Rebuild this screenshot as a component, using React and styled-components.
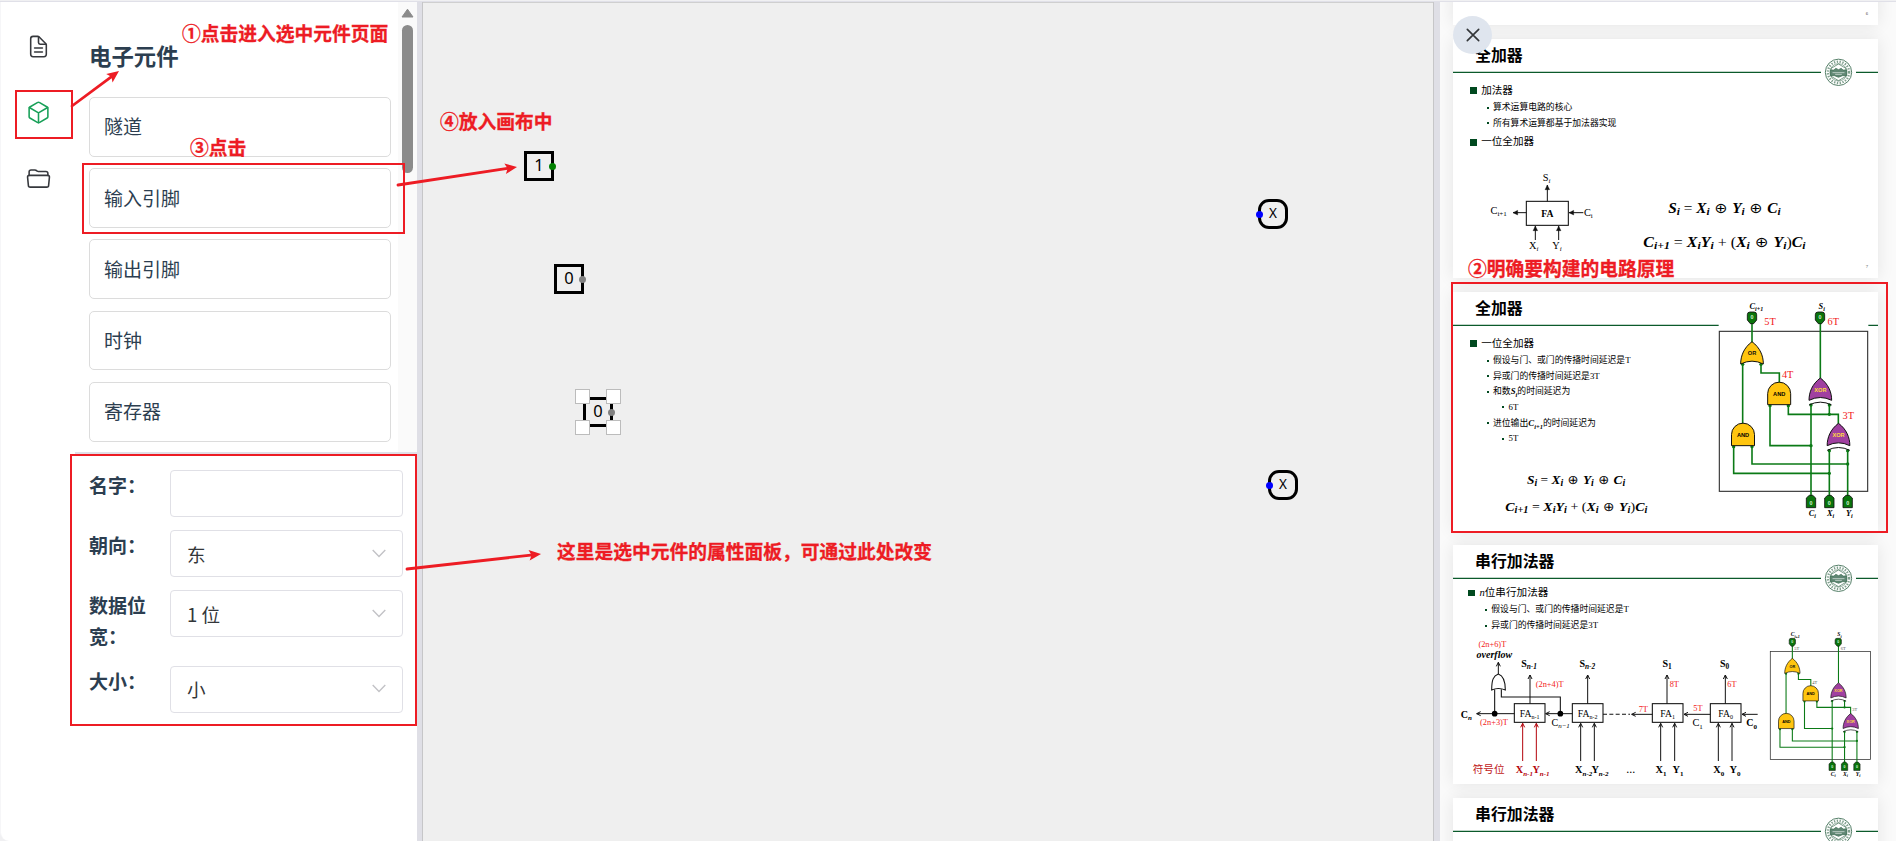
import React from "react";
import styled, { createGlobalStyle } from "styled-components";
import {
  IoDocumentTextOutline,
  IoCubeOutline,
  IoFolderOpenOutline,
  IoCloseOutline,
} from "react-icons/io5";

const SANS = `"Noto Sans CJK SC", "Noto Sans", sans-serif`;
const SERIF = `"Liberation Serif", "Noto Sans CJK SC", serif`;
const RED = "#ed1c24";
const GREEN = "#0b7a16";

const GlobalStyle = createGlobalStyle`
  * { box-sizing: border-box; }
  body { margin: 0; background: #efefef; font-family: ${SANS}; overflow: hidden; }
`;

/* ---------- shell ---------- */
const Shell = styled.div`
  position: relative;
  width: 1896px;
  height: 841px;
  overflow: hidden;
  padding-top: 1px;
  background: #f0f0f2;
`;
const Workspace = styled.main`
  display: flex;
  height: 840px;
  border-top: 1px solid #e0e0e8;
`;
const Sidebar = styled.aside`
  display: flex;
  width: 417px;
  background: #fff;
  border-bottom-left-radius: 9px;
  border-left: 1px solid #f6f6f8;
`;
const Rail = styled.nav`
  width: 74px;
  padding: 32px 0 0 25px;
  display: flex;
  flex-direction: column;
  gap: 41px;
`;
const RailIcon = styled.span`
  display: flex;
  width: 25px;
  height: 25px;
  font-size: 25px;
  color: ${(p) => (p.$active ? "#18a058" : "#36383d")};
`;
const Panels = styled.div`
  flex: 1;
  display: flex;
  flex-direction: column;
`;
const LibraryPane = styled.section`
  display: flex;
  height: 450px;
`;
const Library = styled.div`
  flex: 1;
  padding: 37px 7px 0 14px;
`;
const LibraryTitle = styled.h2`
  margin: 0 0 25.6px;
  font-size: 22.4px;
  line-height: 32.4px;
  color: #2c3e50;
`;
const PartList = styled.div`
  display: flex;
  flex-direction: column;
  gap: 11.4px;
`;
const PartCard = styled.div`
  height: 59.8px;
  padding: 0 14px 2px;
  display: flex;
  align-items: center;
  border: 1px solid #dcdcdc;
  border-radius: 5px;
  font-size: 19px;
  color: #2c3e50;
`;
const ScrollTrack = styled.div`
  width: 19px;
  background: #fafafa;
  display: flex;
  flex-direction: column;
  align-items: center;
  padding-top: 6px;
`;
const ScrollArrow = styled.svg`
  display: block;
  width: 13px;
  height: 10px;
`;
const ScrollThumb = styled.div`
  width: 11px;
  height: 148px;
  margin-top: 7px;
  border-radius: 6px;
  background: #8b8b8b;
`;
const Properties = styled.section`
  flex: 1;
  display: flex;
  flex-direction: column;
  gap: 13.2px;
  padding: 16px 14px 0;
  border-top: 2px solid #dfdfe7;
`;
const PropertyRow = styled.label`
  display: flex;
  align-items: flex-start;
`;
const PropertyName = styled.span`
  width: 81px;
  margin-top: -1px;
  margin-bottom: 1px;
  padding-right: 19px;
  font-size: 19px;
  line-height: 31px;
  font-weight: 700;
  color: #2c3e50;
`;
const Field = styled.span`
  flex: 1;
  height: 47px;
  padding: 0 16px 1px;
  display: flex;
  align-items: center;
  justify-content: space-between;
  border: 1px solid #e0e0e6;
  border-radius: 4px;
  font-size: 18.6px;
  color: #333639;
`;
const Splitter = styled.div`
  width: ${(p) => p.$width}px;
  background: #dfdfe6;
  border-${(p) => p.$edge}: 1px solid #c6c6c8;
`;

/* ---------- circuit canvas ---------- */
const Canvas = styled.section`
  position: relative;
  width: 1010px;
  background: #efefef;
  border-top: 1px solid #cfcfcf;
`;
const Pin = styled.div`
  position: absolute;
  left: ${(p) => p.$x}px;
  top: ${(p) => p.$y}px;
  width: 30px;
  height: 30px;
  border: 3px solid #000;
  border-radius: ${(p) => (p.$round ? 11 : 0)}px;
  font: ${(p) => (p.$round ? 13.5 : 16.5)}px/${(p) => (p.$round ? 23 : 22)}px "Noto Sans", sans-serif;
  text-align: center;
  color: #000;
`;
const Port = styled.i`
  position: absolute;
  top: 8.5px;
  ${(p) => p.$side}: -5px;
  width: 7px;
  height: 7px;
  border-radius: 50%;
  background: ${(p) => p.$color};
`;
const Handle = styled.i`
  position: absolute;
  ${(p) => p.$v}: -11px;
  ${(p) => p.$h}: -11px;
  width: 15px;
  height: 15px;
  background: #fff;
  border: 1px solid #bcbcbc;
`;

/* ---------- slides ---------- */
const Deck = styled.aside`
  position: relative;
  flex: 1;
  overflow: hidden;
  background: #fafafa;
`;
const SlideList = styled.div`
  display: flex;
  flex-direction: column;
  gap: 14px;
  margin-top: -216px;
  padding-left: 13px;
`;
const SlideCard = styled.article`
  position: relative;
  flex: none;
  width: 425px;
  height: 239px;
  background: #fff;
  box-shadow: 0 0 16px rgba(0, 0, 0, 0.09);
`;
const SlideTitle = styled.h3`
  margin: 0;
  height: 32.5px;
  padding-left: 22px;
  font-size: 15.9px;
  line-height: 31px;
  color: #000;
`;
const Bullets = styled.ul`
  margin: 0;
  padding: ${(p) => (p.$tight ? "6.3px 0 0 15.3px" : "10px 0 0 17px")};
  list-style: none;
  color: #000;
`;
const Topic = styled.li`
  display: flex;
  align-items: center;
  height: 18.4px;
  margin-top: ${(p) => p.$gap || 0}px;
  font: 10.6px/18px ${SERIF};
  &::before {
    content: "";
    width: 7px;
    height: 6.5px;
    margin-right: 4.2px;
    background: #00491f;
  }
`;
const Point = styled.li`
  display: flex;
  align-items: center;
  height: 15.6px;
  padding-left: ${(p) => (p.$deep ? 32 : 16.5)}px;
  font: 8.82px/15px ${SERIF};
  &::before {
    content: "";
    width: 2px;
    height: 2px;
    margin-right: 4.5px;
    background: #00491f;
  }
`;
const MathSymbol = styled.span`
  font-weight: 700;
  font-style: italic;
  sub { font-size: 6.5px; line-height: 0; }
`;
const Figure = styled.svg`
  position: absolute;
  inset: 0;
  width: 425px;
  height: 239px;
`;
const CloseButton = styled.button`
  position: absolute;
  left: 13px;
  top: 14px;
  width: 39px;
  height: 38px;
  padding: 0;
  display: grid;
  place-items: center;
  border: 0;
  border-radius: 50%;
  background: #dfe5ee;
  color: #333639;
  font-size: 26px;
`;

/* ---------- annotations ---------- */
const Highlight = styled.div`
  position: absolute;
  left: ${(p) => p.$x}px;
  top: ${(p) => p.$y}px;
  width: ${(p) => p.$w}px;
  height: ${(p) => p.$h}px;
  border: 2px solid ${RED};
`;
const Note = styled.span`
  position: absolute;
  left: ${(p) => p.$x}px;
  top: ${(p) => p.$y - 15}px;
  font-size: 18.75px;
  line-height: 28px;
  font-weight: 700;
  -webkit-text-stroke: 0.3px ${RED};
  white-space: nowrap;
  color: ${RED};
`;
const ArrowLayer = styled.svg`
  position: absolute;
  inset: 0;
  pointer-events: none;
`;

const Chevron = () => (
  <svg width="14" height="9" viewBox="0 0 14 9">
    <path d="M.7 1 7 7.4 13.3 1" fill="none" stroke="#c2c2c6" strokeWidth="1.4" />
  </svg>
);

function PointerArrow({ x1, y1, x2, y2 }) {
  const angle = (Math.atan2(y2 - y1, x2 - x1) * 180) / Math.PI;
  const length = Math.hypot(x2 - x1, y2 - y1);
  return (
    <g transform={`translate(${x1} ${y1}) rotate(${angle})`}>
      <path d={`M0 0H${length - 8}`} stroke={RED} strokeWidth="2.8" strokeLinecap="round" />
      <path d={`M${length} 0l-12 -5.3 2.5 5.3 -2.5 5.3z`} fill={RED} />
    </g>
  );
}

const Seal = () => (
  <g transform="translate(1156.5 100)" fill="none" stroke="#3a6b50">
    <circle r="50" fill="#fff" stroke="none" />
    <circle r="39.5" strokeWidth="2.6" />
    <circle r="32" strokeWidth="7" strokeDasharray="4 4.5" stroke="#7f9f8d" />
    <circle r="26" strokeWidth="1.6" />
    <path d="M0-25 22-12V12L0 25-22 12V-12z" strokeWidth="2" />
    <path d="M-24-7h10l6-5 8 4 8-4 6 5h10v17h-12l-12 5-12-5h-12z" fill="#5f8673" strokeWidth="2" />
    <path d="M-18 1H18M-10 6H10" stroke="#e8efeb" strokeWidth="2" />
  </g>
);

/* text with a subscript, set in figure units */
const Sym = ({ x, y, base, sub, size = 31, subSize = 21, bold, italic, subItalic = true, fill = "#000" }) => (
  <text
    x={x}
    y={y}
    textAnchor="middle"
    fill={fill}
    fontFamily={SERIF}
    fontSize={size}
    fontWeight={bold ? 700 : 400}
    fontStyle={italic ? "italic" : "normal"}
  >
    {base}
    <tspan dy={size * 0.22} fontSize={subSize} fontStyle={subItalic ? "italic" : "normal"}>{sub}</tspan>
  </text>
);

const Formula = ({ x, y, width, size, parts }) => {
  const drop = size * 0.17;
  let lowered = false;
  return (
    <text x={x} y={y} textLength={width} lengthAdjust="spacingAndGlyphs" fontSize={size} fontFamily={`"Liberation Serif", "DejaVu Sans", serif`} fill="#000" xmlSpace="preserve">
      {parts.map((part, i) => {
        const isSub = part[0] === "_";
        const isSign = /[=⊕+()]/.test(part) && !isSub;
        const isPlusRing = part.includes("⊕");
        const dy = isSub && !lowered ? drop : !isSub && lowered ? -drop : 0;
        lowered = isSub;
        return (
          <tspan
            key={i}
            dy={dy}
            fontSize={isSub ? size * 0.74 : size}
            fontFamily={isPlusRing ? "DejaVu Sans" : undefined}
            fontWeight={isSign ? 400 : 700}
            fontStyle={isSign ? "normal" : "italic"}
          >
            {isSub ? part.slice(1) : part}
          </tspan>
        );
      })}
    </text>
  );
};
const SUM = ["S", "_i", " = ", "X", "_i", " ⊕ ", "Y", "_i", " ⊕ ", "C", "_i"];
const CARRY = ["C", "_i+1", " = ", "X", "_i", "Y", "_i", " + (", "X", "_i", " ⊕ ", "Y", "_i", ")", "C", "_i"];

/* ---------- one-bit adder schematic ---------- */
const gateText = { fontFamily: "Liberation Sans", fontWeight: 700, fontSize: 17, textAnchor: "middle" };
const AndGate = ({ x, y }) => (
  <g transform={`translate(${x} ${y})`}>
    <path d="M-34.5 67V34A34.5 34.5 0 0 1 34.5 34V67Z" fill="#ffc50f" stroke="#111" strokeWidth="3" />
    <text y="41" {...gateText}>AND</text>
  </g>
);
const OrGate = ({ x, y, exclusive }) => (
  <g transform={`translate(${x} ${y})`} stroke="#111" strokeWidth="3">
    <path d="M0 0C-24 18-34 42-34 67Q0 50 34 67C34 42 24 18 0 0Z" fill={exclusive ? "#a040a0" : "#ffc50f"} />
    {exclusive && <path d="M-34 81Q0 64 34 81" fill="none" />}
    <text y="41" {...gateText} stroke="none" fill={exclusive ? "#ffdc3c" : "#111"}>{exclusive ? "XOR" : "OR"}</text>
  </g>
);
const Terminal = ({ x, y, up }) => (
  <g transform={`translate(${x} ${y})`}>
    <path
      d={up ? "M-14-12L-5-20H5L14-12V17H-14Z" : "M-14-8Q-14-16-6-16H6Q14-16 14-8V8L5 19H-5L-14 8Z"}
      fill="#0a740c"
      stroke="#111"
      strokeWidth="2.5"
    />
    <text y={up ? 8 : 5} {...gateText} fontSize="16" fill="#d8f5d8">0</text>
  </g>
);
function AdderCircuit({ transform, delays, delayColor, delaySize }) {
  return (
    <g transform={transform}>
      <rect x="86" y="60" width="449" height="660" fill="#fff" />
      <rect x="88" y="154" width="445" height="480" fill="none" stroke="#333" strokeWidth="3.4" />
      <g fill="none" stroke={GREEN} strokeWidth="4.8">
        <path d="M186 128V190M158 250V432M213 250V279H268V309M391 128V296" />
        <path d="M240 374V497H363M295 374V403H445V432M363 374V648M418 374V403" />
        <path d="M131 497V580H418M186 497V552H473M418 511V648M473 511V648" />
      </g>
      <g fill={GREEN}>
        {[[363, 497], [418, 403], [473, 552], [418, 580], [158, 253], [213, 253], [240, 377], [295, 377], [363, 375], [418, 375], [131, 500], [186, 500], [418, 512], [473, 512]].map(([x, y]) => (
          <circle key={`${x}-${y}`} cx={x} cy={y} r="5" />
        ))}
      </g>
      <OrGate x={186} y={185} />
      <AndGate x={267.5} y={307} />
      <AndGate x={159} y={430} />
      <OrGate x={391} y={294} exclusive />
      <OrGate x={445.5} y={430} exclusive />
      <Terminal x={186} y={112} />
      <Terminal x={390} y={112} />
      {[363, 418, 473].map((x) => <Terminal key={x} x={x} y={666} up />)}
      <Sym x={199} y={87} base="C" sub="i+1" size={25} subSize={18} bold italic />
      <Sym x={395} y={87} base="S" sub="i" size={25} subSize={18} bold italic />
      <Sym x={367} y={709} base="C" sub="i" size={25} subSize={18} bold italic />
      <Sym x={422} y={709} base="X" sub="i" size={25} subSize={18} bold italic />
      <Sym x={478} y={709} base="Y" sub="i" size={25} subSize={18} bold italic />
      {delays.map(([label, x, y]) => (
        <text key={label} x={x} y={y} textAnchor="middle" fontFamily={SERIF} fontSize={delaySize} fill={delayColor}>{label}</text>
      ))}
    </g>
  );
}

/* ---------- block diagrams ---------- */
const Wire = ({ x1, y1, x2, y2, color = "#111", open }) => {
  const a = (Math.atan2(y2 - y1, x2 - x1) * 180) / Math.PI;
  return (
    <g stroke={color} strokeWidth="3">
      <path d={`M${x1} ${y1}L${x2} ${y2}`} />
      <path
        d={open ? "M-12-6L0 0-12 6" : "M0 0L-14-7V7Z"}
        transform={`translate(${x2} ${y2}) rotate(${a})`}
        fill={open ? "none" : color}
        strokeWidth={open ? 3 : 1}
      />
    </g>
  );
};

const SingleAdder = () => (
  <g transform="translate(-69 303)">
    <rect x="289" y="184" width="126" height="72" fill="none" stroke="#111" strokeWidth="3.2" />
    <text x="352" y="231" textAnchor="middle" fontFamily={SERIF} fontWeight="700" fontSize="29">FA</text>
    <Wire x1={352} y1={184} x2={352} y2={135} />
    <Wire x1={289} y1={218} x2={249} y2={218} />
    <Wire x1={460} y1={218} x2={417} y2={218} />
    <Wire x1={316} y1={300} x2={316} y2={258} />
    <Wire x1={386} y1={300} x2={386} y2={258} />
    <Sym x={350} y={122} base="S" sub="i" />
    <Sym x={206} y={222} base="C" sub="i+1" subItalic={false} />
    <Sym x={475} y={228} base="C" sub="i" subItalic={false} />
    <Sym x={311} y={327} base="X" sub="i" />
    <Sym x={381} y={327} base="Y" sub="i" />
  </g>
);

const STAGES = [
  { x: 253, s: 300, sLabel: 297, inputs: [278, 319], names: [283, 333], sub: "n-1", color: "#b4040c" },
  { x: 427, s: 473, sLabel: 472, inputs: [452, 493], names: [461, 510], sub: "n-2" },
  { x: 667, s: 711, sLabel: 711, inputs: [692, 734], names: [693, 744], sub: "1" },
  { x: 841, s: 886, sLabel: 884, inputs: [865, 906], names: [866, 915], sub: "0" },
];
const CHAIN_DELAYS = [
  ["(2n+6)T", 187, 335], ["(2n+4)T", 359, 456], ["(2n+3)T", 192, 570],
  ["7T", 640, 530], ["5T", 804, 527], ["8T", 733, 456], ["6T", 906, 456],
];
const RippleAdder = () => (
  <g transform="translate(-69 -30)">
    {STAGES.map((st) => (
      <g key={st.x}>
        <rect x={st.x} y="506" width="92" height="56" fill="none" stroke="#111" strokeWidth="3.2" />
        <Sym x={st.x + 46} y={545} base="FA" sub={st.sub} size={29} subSize={18} subItalic={false} />
        <Wire open x1={st.s} y1={506} x2={st.s} y2={420} />
        <Sym x={st.sLabel} y={395} base="S" sub={st.sub} size={30} subSize={22} bold subItalic={st.sub.length > 1} />
        {st.inputs.map((x) => <Wire key={x} open x1={x} y1={678} x2={x} y2={565} color={st.color} />)}
        <Sym x={st.names[0]} y={715} base="X" sub={st.sub} size={31} bold fill={st.color} subItalic={st.sub.length > 1} />
        <Sym x={st.names[1]} y={715} base="Y" sub={st.sub} size={31} bold fill={st.color} subItalic={st.sub.length > 1} />
      </g>
    ))}
    <Wire open x1={253} y1={536} x2={140} y2={536} />
    <Wire open x1={427} y1={536} x2={347} y2={536} />
    <Wire open x1={667} y1={538} x2={605} y2={538} />
    <Wire open x1={841} y1={538} x2={762} y2={538} />
    <Wire open x1={983} y1={538} x2={936} y2={538} />
    <Wire open x1={205} y1={417} x2={205} y2={382} />
    <g fill="none" stroke="#111" strokeWidth="3.2">
      <path d="M519 538H600" strokeDasharray="12 7" />
      <path d="M194 536V463M214 463V486H391V536" />
      <path d="M205 417C190 422 185 435 185 465Q205 456 226 465C226 435 220 422 205 417Z" fill="#fff" />
    </g>
    <circle cx="194" cy="536" r="8.5" />
    <circle cx="391" cy="536" r="8.5" />
    <Sym x={109} y={549} base="C" sub="n" size={30} bold />
    <Sym x={392} y={573} base="C" sub="n−1" size={30} />
    <Sym x={803} y={574} base="C" sub="1" size={31} subItalic={false} />
    <Sym x={965} y={574} base="C" sub="0" size={30} bold subItalic={false} />
    {CHAIN_DELAYS.map(([label, x, y]) => (
      <text key={label} x={x} y={y} textAnchor="middle" fontFamily={SERIF} fontSize="25" fill="#f21a1a">{label}</text>
    ))}
    <text x="193" y="370" textAnchor="middle" fontFamily={SERIF} fontSize="30" fontWeight="700" fontStyle="italic">overflow</text>
    <text x="128" y="714" fontFamily={SANS} fontSize="32" fill="#c02020">符号位</text>
    <text x="602" y="714" textAnchor="middle" fontFamily={SERIF} fontSize="36">...</text>
  </g>
);

function Slide({ title, page, seal = true, figure, children }) {
  return (
    <SlideCard>
      <SlideTitle>{title}</SlideTitle>
      {children}
      <Figure viewBox="0 0 1275 717">
        {title && <path d="M0 100H1275" stroke="#0b5a2b" strokeWidth="4" />}
        {title && seal && (
          <>
            <path d="M1104 100H1209" stroke="#fff" strokeWidth="8" />
            <Seal />
          </>
        )}
        {figure}
        {page && <text x="1242" y="688" textAnchor="middle" fontSize="14" fontFamily={SERIF} fill="#444">{page}</text>}
      </Figure>
    </SlideCard>
  );
}

const parts = ["隧道", "输入引脚", "输出引脚", "时钟", "寄存器"];
const properties = [
  { name: "名字：" },
  { name: "朝向：", value: "东" },
  { name: "数据位宽：", value: "1 位" },
  { name: "大小：", value: "小" },
];

export default function App() {
  return (
    <Shell>
      <GlobalStyle />
      <Workspace>
        <Sidebar>
          <Rail>
            <RailIcon><IoDocumentTextOutline /></RailIcon>
            <RailIcon $active><IoCubeOutline /></RailIcon>
            <RailIcon><IoFolderOpenOutline /></RailIcon>
          </Rail>
          <Panels>
            <LibraryPane>
              <Library>
                <LibraryTitle>电子元件</LibraryTitle>
                <PartList>
                  {parts.map((name) => <PartCard key={name}>{name}</PartCard>)}
                </PartList>
              </Library>
              <ScrollTrack>
                <ScrollArrow viewBox="0 0 13 10"><path d="M6.5 1.2 12 9H1z" fill="#8b8b8b" stroke="#8b8b8b" strokeLinejoin="round" /></ScrollArrow>
                <ScrollThumb />
              </ScrollTrack>
            </LibraryPane>
            <Properties>
              {properties.map(({ name, value }) => (
                <PropertyRow key={name}>
                  <PropertyName>{name}</PropertyName>
                  <Field>{value && <>{value}<Chevron /></>}</Field>
                </PropertyRow>
              ))}
            </Properties>
          </Panels>
        </Sidebar>
        <Splitter $width={6} $edge="right" />
        <Canvas>
          <Pin $x={101} $y={148}>1<Port $side="right" $color="#008000" /></Pin>
          <Pin $x={131} $y={261}>0<Port $side="right" $color="#808080" /></Pin>
          <Pin $x={160} $y={394}>
            0<Port $side="right" $color="#808080" />
            <Handle $v="top" $h="left" /><Handle $v="top" $h="right" />
            <Handle $v="bottom" $h="left" /><Handle $v="bottom" $h="right" />
          </Pin>
          <Pin $x={835} $y={196} $round>X<Port $side="left" $color="#0000ff" /></Pin>
          <Pin $x={845} $y={467} $round>X<Port $side="left" $color="#0000ff" /></Pin>
        </Canvas>
        <Splitter $width={7} $edge="left" />
        <Deck>
          <SlideList>
            <Slide page="6" />
            <Slide
              title="全加器"
              page="7"
              figure={
                <>
                  <SingleAdder />
                  <Formula x={646} y={521} width={337} size={43} parts={SUM} />
                  <Formula x={571} y={623} width={487} size={43} parts={CARRY} />
                </>
              }
            >
              <Bullets>
                <Topic>加法器</Topic>
                <Point>算术运算电路的核心</Point>
                <Point>所有算术运算都基于加法器实现</Point>
                <Topic $gap={2}>一位全加器</Topic>
              </Bullets>
            </Slide>
            <Slide
              title="全加器"
              seal={false}
              figure={
                <>
                  <AdderCircuit
                    transform="translate(711 -36)"
                    delaySize={31}
                    delayColor="#f21a1a"
                    delays={[["5T", 240, 135], ["6T", 430, 135], ["4T", 293, 295], ["3T", 475, 417]]}
                  />
                  <Formula x={222} y={576} width={295} size={38} parts={SUM} />
                  <Formula x={157} y={656} width={426} size={38} parts={CARRY} />
                </>
              }
            >
              <Bullets>
                <Topic>一位全加器</Topic>
                <Point>假设与门、或门的传播时间延迟是T</Point>
                <Point>异或门的传播时间延迟是3T</Point>
                <Point>和数<MathSymbol>S<sub>i</sub></MathSymbol>的时间延迟为</Point>
                <Point $deep>6T</Point>
                <Point>进位输出<MathSymbol>C<sub>i+1</sub></MathSymbol>的时间延迟为</Point>
                <Point $deep>5T</Point>
              </Bullets>
            </Slide>
            <Slide
              title="串行加法器"
              figure={
                <>
                  <RippleAdder />
                  <AdderCircuit
                    transform="translate(892.5 215.2) scale(.675)"
                    delaySize={20}
                    delayColor="#555"
                    delays={[["5T", 206, 150], ["6T", 412, 150], ["4T", 285, 297], ["3T", 463, 417]]}
                  />
                </>
              }
            >
              <Bullets $tight>
                <Topic><i>n</i>位串行加法器</Topic>
                <Point>假设与门、或门的传播时间延迟是T</Point>
                <Point>异或门的传播时间延迟是3T</Point>
              </Bullets>
            </Slide>
            <Slide title="串行加法器" />
          </SlideList>
          <CloseButton aria-label="close"><IoCloseOutline /></CloseButton>
        </Deck>
      </Workspace>

      <ArrowLayer width="1896" height="841">
        <PointerArrow x1={72} y1={106} x2={119} y2={71} />
        <PointerArrow x1={398} y1={185} x2={517} y2={167} />
        <PointerArrow x1={407} y1={569} x2={541} y2={554} />
      </ArrowLayer>
      <Highlight $x={15} $y={90} $w={58} $h={49} />
      <Highlight $x={82} $y={163} $w={323} $h={71} />
      <Highlight $x={70} $y={454} $w={347} $h={272} />
      <Highlight $x={1451} $y={282} $w={437} $h={251} />
      <Note $x={182} $y={34}>①点击进入选中元件页面</Note>
      <Note $x={1468} $y={269}>②明确要构建的电路原理</Note>
      <Note $x={190} $y={148}>③点击</Note>
      <Note $x={440} $y={122}>④放入画布中</Note>
      <Note $x={557} $y={552}>这里是选中元件的属性面板，可通过此处改变</Note>
    </Shell>
  );
}
